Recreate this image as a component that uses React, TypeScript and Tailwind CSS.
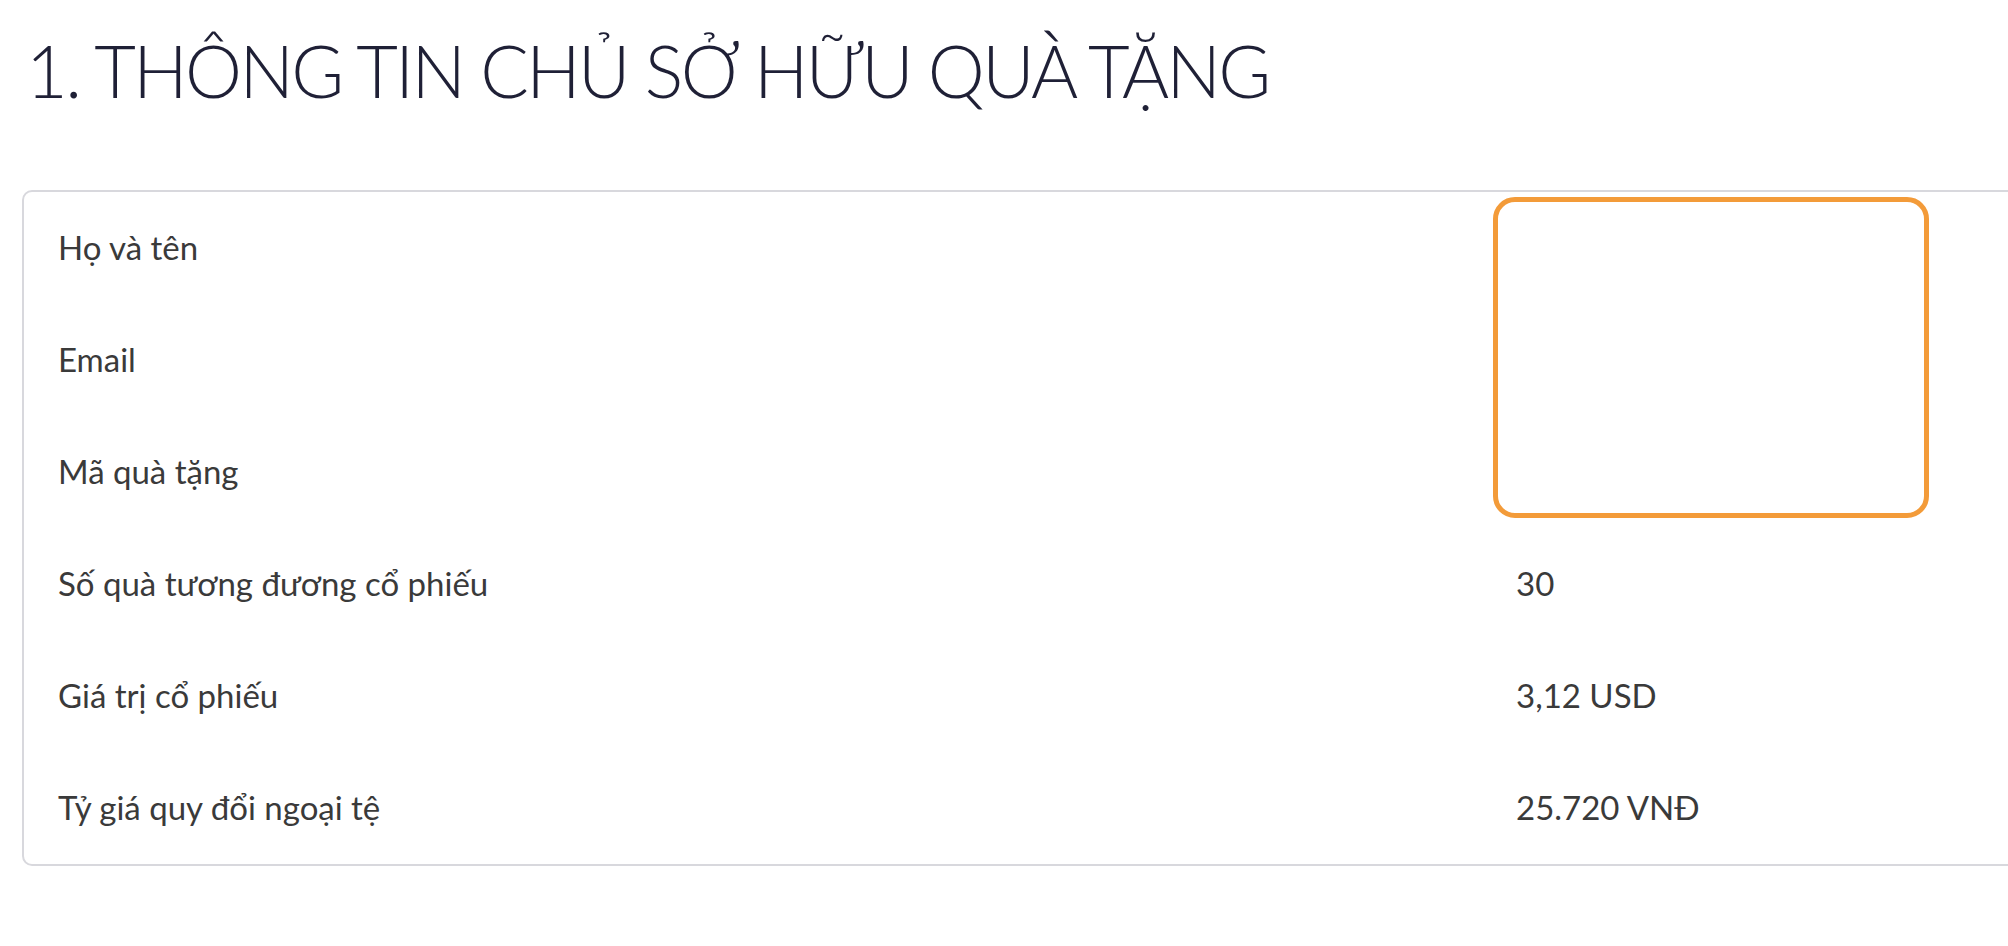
const rows = [
  { label: "Họ và tên", value: "" },
  { label: "Email", value: "" },
  { label: "Mã quà tặng", value: "" },
  { label: "Số quà tương đương cổ phiếu", value: "30" },
  { label: "Giá trị cổ phiếu", value: "3,12 USD" },
  { label: "Tỷ giá quy đổi ngoại tệ", value: "25.720 VNĐ" },
];

export default function App() {
  return (
    <div className="w-screen h-screen overflow-hidden bg-white font-['Lato',sans-serif]">
      <h1 className="pl-[26px] pt-[25px] text-[72px] leading-[90px] font-light tracking-[-2.6px] text-[#1f2036]">
        1. THÔNG TIN CHỦ SỞ HỮU QUÀ TẶNG
      </h1>

      <div className="relative ml-[22px] mt-[75px] w-[2040px] rounded-[10px] border-2 border-[#d8d8dd]">
        {rows.map((r) => (
          <div key={r.label} className="flex h-[112px] items-center text-[33px] text-[#3a3a3a]">
            <div className="w-[1492px] pl-[34px]">{r.label}</div>
            <div>{r.value}</div>
          </div>
        ))}

        {/* highlight over the first three values */}
        <div className="absolute left-[1469px] top-[5px] h-[321px] w-[436px] rounded-[22px] border-[5px] border-[#f39b39]" />
      </div>
    </div>
  );
}
